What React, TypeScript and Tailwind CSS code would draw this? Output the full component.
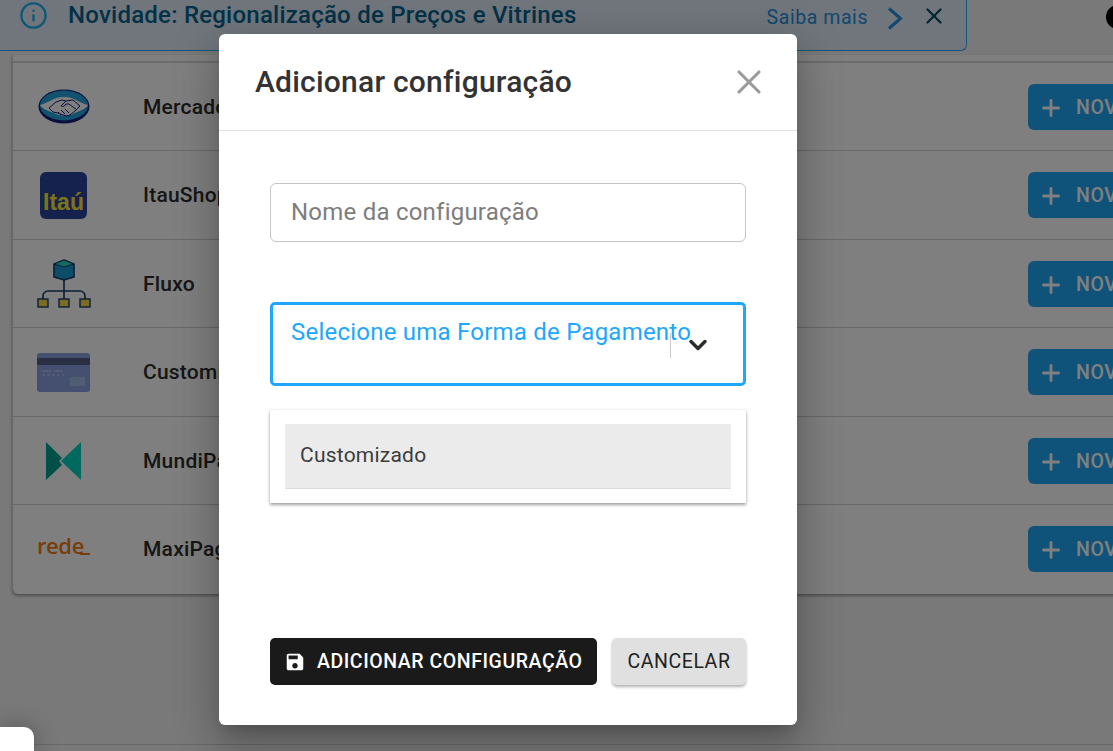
import { ChevronDown, Info, Plus, X } from "lucide-react";
import type { ReactNode } from "react";

function MercadoLogo() {
  return (
    <svg width="52" height="35" viewBox="0 0 52 35" aria-hidden="true">
      <ellipse cx="26" cy="17.5" rx="25.5" ry="17" fill="#14207c" />
      <ellipse cx="26" cy="16.5" rx="24" ry="15" fill="#27a4dc" />
      <path d="M2 16c7-1 13-8 24-8s17 7 24 8c-3 5-10 6-15 9-4 2-12 2-17 0-6-3-13-4-16-9z" fill="#fff" />
      <path d="M11 19l7-6 6-2 4 1 7-1 7 6-5 5-5 4-3 1-4-1-5-2-5-1z" fill="#fff" stroke="#14207c" strokeWidth="1" strokeLinejoin="round" />
      <path d="M28 12l-5 5c2 1 4 0 5-2l3 0 8 6M20 23l3 3M23 21l4 4M27 20l4 4" fill="none" stroke="#14207c" strokeWidth="1" />
    </svg>
  );
}

function ItauLogo() {
  return (
    <div className="flex h-[47px] w-[47px] items-end justify-center rounded-[6px] bg-[#28449a] pb-[5px] font-['Liberation_Sans',sans-serif] text-[23px] leading-none font-bold text-[#fbe834]">
      Itaú
    </div>
  );
}

function FluxoLogo() {
  return (
    <svg width="54" height="49" viewBox="0 0 54 49" aria-hidden="true">
      <path d="M27 1l10 4v13l-10 3-10-3V5z" fill="#1a9bd0" stroke="#123a6b" strokeWidth="1.6" />
      <path d="M17 5l10 3 10-3-10-4z" fill="#25d8c0" stroke="#123a6b" strokeWidth="1" />
      <path d="M27 21v19M6 40v-3a5 5 0 015-5h32a5 5 0 015 5v3" fill="none" stroke="#123a6b" strokeWidth="1.6" />
      <rect x="1" y="40" width="10" height="8" fill="#f5d84a" stroke="#123a6b" strokeWidth="1.4" />
      <rect x="22" y="40" width="10" height="8" fill="#f5d84a" stroke="#123a6b" strokeWidth="1.4" />
      <rect x="43" y="40" width="10" height="8" fill="#f5d84a" stroke="#123a6b" strokeWidth="1.4" />
    </svg>
  );
}

function CardLogo() {
  return (
    <svg width="53" height="39" viewBox="0 0 53 39" aria-hidden="true">
      <rect width="53" height="39" rx="3" fill="#8a9ee0" />
      <rect y="5" width="53" height="7" fill="#555f88" />
      <path d="M5 18h9M17 18h9" stroke="#c8d0f0" strokeWidth="1" />
      <path d="M5 22h3M10 22h3M15 22h3M20 22h3M25 22h2" stroke="#c8d0f0" strokeWidth="1" />
      <rect x="33" y="24" width="15" height="9" fill="#a0bce8" />
    </svg>
  );
}

function MundiLogo() {
  return (
    <svg width="37" height="40" viewBox="0 0 37 40" aria-hidden="true">
      <path d="M1 1l16 16-3 3 3 4L1 39z" fill="#00a091" />
      <path d="M36 1L16 20l20 19z" fill="#00d4c0" />
    </svg>
  );
}

function RedeLogo() {
  return (
    <div className="relative h-[20px] w-[53px]">
      <span className="absolute top-[-9px] left-0 font-['Open_Sans',sans-serif] text-[22px] leading-[30px] font-semibold tracking-[-0.4px] text-[#f07a10]">
        rede
      </span>
      <div className="absolute right-0 bottom-[4px] h-[2px] w-[10px] bg-[#f07a10]" />
    </div>
  );
}

const rows: { name: string; logo: ReactNode; h: string }[] = [
  { name: "Mercado Pago", logo: <MercadoLogo />, h: "h-[88px]" },
  { name: "ItauShopline", logo: <ItauLogo />, h: "h-[89px]" },
  { name: "Fluxo", logo: <FluxoLogo />, h: "h-[88px]" },
  { name: "Customizado", logo: <CardLogo />, h: "h-[89px]" },
  { name: "MundiPagg", logo: <MundiLogo />, h: "h-[88px]" },
  { name: "MaxiPago", logo: <RedeLogo />, h: "h-[88px]" },
];

export default function App() {
  return (
    <div className="relative h-[751px] w-[1113px] overflow-hidden bg-[#f2f2f2] font-['Roboto',sans-serif]">
      {/* Background page */}
      <div className="flex h-[51px] w-[967px] items-start rounded-br-[6px] border-r border-b border-[#1eb0f0] bg-[#e2ecfa] pt-[1px] pl-[19px]">
        <Info size={29} strokeWidth={2} className="shrink-0 text-[#1eb0f0]" />
        <span className="ml-[20px] text-[24px] leading-[28px] font-medium tracking-[0.00938em] text-[#04658f]">
          Novidade: Regionalização de Preços e Vitrines
        </span>
        <span className="mt-[4px] ml-auto text-[19.5px] leading-[26px] tracking-[0.02857em] text-[#2490e0]">
          Saiba mais
        </span>
        <svg width="16" height="23" viewBox="0 0 16 23" fill="none" stroke="#2490e0" strokeWidth="3" aria-hidden="true" className="mt-[6px] ml-[19px] shrink-0">
          <path d="M2 1.5L13.5 11.5 2 21.5" />
        </svg>
        <X size={26} strokeWidth={2} className="mt-[2px] mr-[19px] ml-[18px] shrink-0 text-[#044a66]" />
      </div>

      <div className="mt-[4px] ml-[12px] w-[1130px] rounded-b-[6px] border-l border-[#cfcfcf] bg-white pt-[6px] pb-[1px] shadow-[0_2px_3px_rgba(0,0,0,0.35)]">
        <div className="border-t-2 border-[#d8d8d8]">
          {rows.map((row, i) => (
            <div
              key={row.name}
              className={`flex items-center ${row.h} ${i < rows.length - 1 ? "border-b border-[#d2d2d2]" : ""}`}
            >
              <div className="flex w-[101px] shrink-0 justify-center">{row.logo}</div>
              <span className="mt-[2px] ml-[29px] text-[21px] font-medium tracking-[0.01071em] text-[#2c2c2c]">{row.name}</span>
              <button className="mr-[-76px] ml-auto flex h-[46px] w-[190px] shrink-0 items-center rounded-[6px] bg-[#1ea7f5] pt-[2px] pl-[10px] text-[19.5px] font-medium tracking-[0.02857em] whitespace-nowrap text-white">
                <Plus size={26} strokeWidth={2.6} className="mr-[12px] shrink-0" />
                NOVA
              </button>
            </div>
          ))}
        </div>
      </div>

      <div className="absolute top-[744px] left-[34px] h-[1px] w-full bg-[#d0d0d0]" />

      {/* Overlay */}
      <div className="absolute inset-0 bg-black/50" />

      <div className="absolute top-[5px] left-[1106px] h-[24px] w-[24px] rounded-full bg-black" />
      <div className="absolute top-[727px] left-0 h-[30px] w-[34px] rounded-tr-[10px] bg-white shadow-[0_0_24px_rgba(0,0,0,0.3)]" />

      {/* Modal */}
      <div className="absolute top-[34px] left-[219px] flex h-[691px] w-[578px] flex-col rounded-[6px] bg-white shadow-[0_11px_15px_-7px_rgba(0,0,0,0.2),0_24px_38px_3px_rgba(0,0,0,0.14),0_9px_46px_8px_rgba(0,0,0,0.12)]">
        <div className="flex h-[97px] shrink-0 items-center border-b border-[#e0e0e0] pr-[28px] pl-[36px]">
          <h2 className="mt-[-2px] text-[30px] font-medium tracking-[0.0075em] text-[#333333]">Adicionar configuração</h2>
          <X size={40} strokeWidth={1.9} className="ml-auto text-[#9a9a9a]" />
        </div>

        <div className="flex flex-1 flex-col px-[51px] pt-[52px]">
          <div className="flex h-[59px] items-center rounded-[6px] border border-[#c4c4c4] pb-[2px] pl-[20px] text-[24px] tracking-[0.00938em] text-[#7d7d7d]">
            Nome da configuração
          </div>

          <div className="relative mt-[60px] h-[84px] rounded-[5px] border-[3px] border-[#1ea7fd] pt-[12px] pl-[18px] text-[24px] leading-[30px] tracking-[0.00938em] text-[#1ea7fd]">
            Selecione uma Forma de Pagamento
            <div className="absolute top-[28px] left-[397px] h-[25px] w-[1px] bg-[#c8c8c8]" />
            <ChevronDown size={28} strokeWidth={3} className="absolute top-[26px] left-[411px] text-[#2c2c2c]" />
          </div>

          <div className="mt-[24px] h-[93px] bg-white p-[14px_15px] shadow-[0_2px_3px_rgba(0,0,0,0.35),0_0_4px_rgba(0,0,0,0.08)]">
            <div className="flex h-[65px] items-center border-b border-[#dcdcdc] bg-[#ebebeb] pl-[15px] text-[21px] tracking-[0.01071em] text-[#3b3b3b]">
              Customizado
            </div>
          </div>

          <div className="mt-[135px] flex gap-[15px]">
            <button className="flex h-[47px] w-[327px] items-center rounded-[5px] bg-[#1a1a1a] pl-[14px] text-[19.5px] font-medium tracking-[0.02857em] whitespace-nowrap text-white">
              <svg width="22" height="22" viewBox="0 0 24 24" fill="currentColor" aria-hidden="true" className="mr-[11px] shrink-0">
                <path d="M17 3H5c-1.11 0-2 .9-2 2v14c0 1.1.89 2 2 2h14c1.1 0 2-.9 2-2V7l-4-4zm-5 16c-1.66 0-3-1.34-3-3s1.34-3 3-3 3 1.34 3 3-1.34 3-3 3zm3-10H5V5h10v4z" />
              </svg>
              ADICIONAR CONFIGURAÇÃO
            </button>
            <button className="h-[47px] w-[134px] rounded-[5px] bg-[#e0e0e0] text-[19.5px] tracking-[0.02857em] text-[#222222] shadow-[0_2px_3px_rgba(0,0,0,0.3)]">
              CANCELAR
            </button>
          </div>
        </div>
      </div>
    </div>
  );
}
